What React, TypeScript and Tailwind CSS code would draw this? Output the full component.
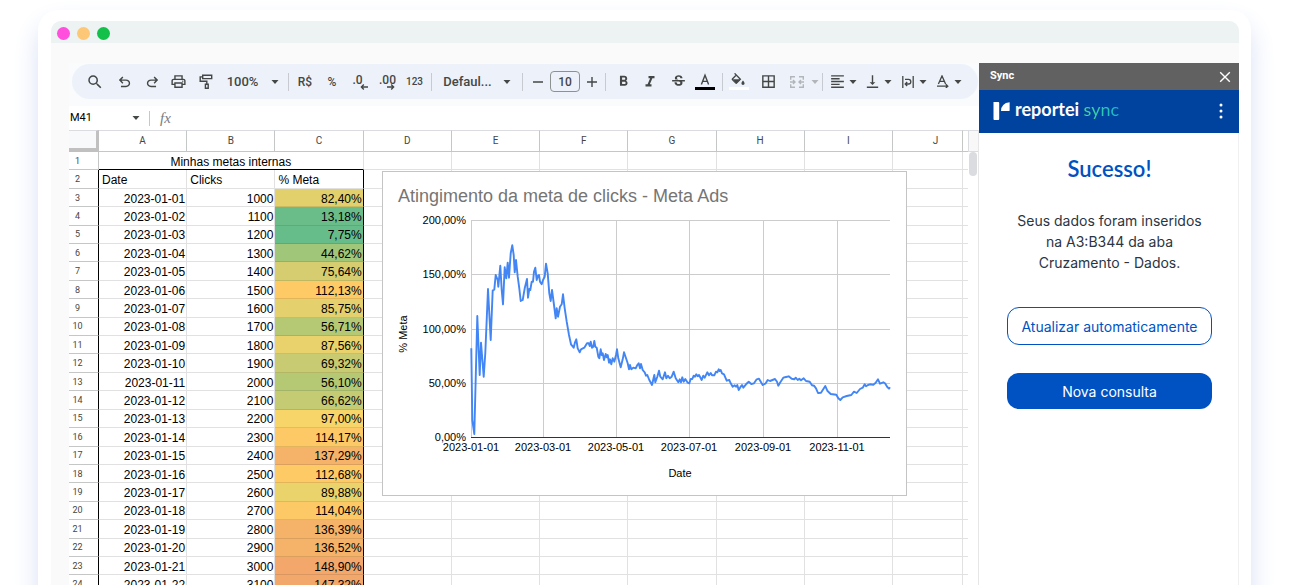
import React from 'react';
import { MdBorderAll, MdFormatAlignLeft, MdFormatBold, MdFormatItalic, MdOutlinePrint, MdSearch, MdStrikethroughS, MdVerticalAlignBottom } from 'react-icons/md';

// ── Data ─────────────────────────────────────────────────────────────────────

type Row = { date: string; clicks: number; meta: string; tone: string };

const ROWS: Row[] = [
  { date: '2023-01-01', clicks: 1000, meta: '82,40%', tone: 'bg-[#e1d06c]' },
  { date: '2023-01-02', clicks: 1100, meta: '13,18%', tone: 'bg-[#6abd88]' },
  { date: '2023-01-03', clicks: 1200, meta: '7,75%', tone: 'bg-[#67bd89]' },
  { date: '2023-01-04', clicks: 1300, meta: '44,62%', tone: 'bg-[#a0c67a]' },
  { date: '2023-01-05', clicks: 1400, meta: '75,64%', tone: 'bg-[#d5cd6f]' },
  { date: '2023-01-06', clicks: 1500, meta: '112,13%', tone: 'bg-[#fdca65]' },
  { date: '2023-01-07', clicks: 1600, meta: '85,75%', tone: 'bg-[#e4d16d]' },
  { date: '2023-01-08', clicks: 1700, meta: '56,71%', tone: 'bg-[#b5c975]' },
  { date: '2023-01-09', clicks: 1800, meta: '87,56%', tone: 'bg-[#e9d26b]' },
  { date: '2023-01-10', clicks: 1900, meta: '69,32%', tone: 'bg-[#c9cb72]' },
  { date: '2023-01-11', clicks: 2000, meta: '56,10%', tone: 'bg-[#b5c975]' },
  { date: '2023-01-12', clicks: 2100, meta: '66,62%', tone: 'bg-[#c5cb72]' },
  { date: '2023-01-13', clicks: 2200, meta: '97,00%', tone: 'bg-[#f8d568]' },
  { date: '2023-01-14', clicks: 2300, meta: '114,17%', tone: 'bg-[#fcc966]' },
  { date: '2023-01-15', clicks: 2400, meta: '137,29%', tone: 'bg-[#f4b369]' },
  { date: '2023-01-16', clicks: 2500, meta: '112,68%', tone: 'bg-[#fdca65]' },
  { date: '2023-01-17', clicks: 2600, meta: '89,88%', tone: 'bg-[#ead36b]' },
  { date: '2023-01-18', clicks: 2700, meta: '114,04%', tone: 'bg-[#fcc966]' },
  { date: '2023-01-19', clicks: 2800, meta: '136,39%', tone: 'bg-[#f4b369]' },
  { date: '2023-01-20', clicks: 2900, meta: '136,52%', tone: 'bg-[#f4b369]' },
  { date: '2023-01-21', clicks: 3000, meta: '148,90%', tone: 'bg-[#f3a76b]' },
  { date: '2023-01-22', clicks: 3100, meta: '147,32%', tone: 'bg-[#f3a86b]' },
];

const COLUMNS = ['A', 'B', 'C', 'D', 'E', 'F', 'G', 'H', 'I', 'J'];

const X_TICKS = [
  { x: 89, label: '2023-01-01' },
  { x: 161, label: '2023-03-01' },
  { x: 234, label: '2023-05-01' },
  { x: 307, label: '2023-07-01' },
  { x: 381, label: '2023-09-01' },
  { x: 455, label: '2023-11-01' },
];

const Y_TICKS = [
  { y: 49, label: '200,00%' },
  { y: 103, label: '150,00%' },
  { y: 158, label: '100,00%' },
  { y: 212, label: '50,00%' },
  { y: 266, label: '0,00%' },
];

const SERIES =
  '89.3,177.3 90.3,249 92.3,263 95.3,145 97.7,204 99,171.7 101.7,205.7 103.3,182 106,118 108.7,169 110.7,119.3 112.3,118.7 ' +
  '113.7,104 115.7,109 116.3,115.7 118.3,94.7 119.7,119 121,133.3 122.7,96.3 124.3,107.3 125.7,91.7 127,106.7 128.7,82.3 ' +
  '130.3,74.3 131.7,84 132.7,101.3 134,89 135.7,105.7 137.3,117.3 138.7,130 140.7,129 142.7,117.3 145,108 146,126.7 ' +
  '147.3,118 148.3,119 149.7,110.7 151,110.7 152,100.7 153.3,96.7 154.7,109 156,104.7 157,104 158,110.7 159.7,113.3 ' +
  '161,109 162.7,105.7 164,92.7 165.7,102.3 167.3,122.3 168.7,130 170,119 172,134 173.7,147.3 174.7,137.3 176,145.7 ' +
  '178,135.7 179.7,133.3 181,123.3 182.7,137.3 184.7,150.7 187,164 189,173.3 191.7,176.7 193,171.3 194.3,168.3 ' +
  '195.7,177.3 197.7,181.3 199,178.3 202.3,176.7 205,172.3 206.7,172.3 207.7,175 208.7,170.7 210,176.7 211.3,175.7 ' +
  '212.3,170 213.3,175.7 214.7,176.7 216.3,185.7 217.3,187.3 218.7,178.3 219.7,184 220.7,182.3 222,189 223.7,183 ' +
  '224.7,186.3 225.7,184 227,191.7 228,188.3 229.3,193.3 230.7,187.3 232.3,190.7 234,184 235,178.3 236.3,187.3 ' +
  '238.7,196.3 240.7,188.3 242,181.3 243.7,186.3 245.7,192.3 247,198.3 248,194 249.3,198.3 251.3,196.7 253.7,197.3 ' +
  '255.3,194 256.7,192.3 258,197.3 259,193 260.7,199 262.7,201.3 264,204.7 265.3,204 267.3,209 270,214 272.3,204 ' +
  '273.3,211.3 275.3,205.7 277,199.7 278.3,205.7 280.7,208.3 283,201.3 284.3,207.3 286,204.7 287.7,207.3 289.7,205.7 ' +
  '291.7,200.7 293.7,207.3 296.3,211.3 297.7,208.3 299,211.3 300.3,206.3 301.7,210.7 303.3,208 305.7,211.7 307.3,212.3 ' +
  '308.7,208 310.3,208 311.7,204.7 313,205.7 314.3,203.3 315.7,205.3 317,204 319.7,209 321.3,204.7 322.7,206.7 ' +
  '325.3,201.3 327,204.3 328.7,202 330,204.3 332.3,204.3 334,200.7 335.3,201.3 336.7,198.3 337.7,200 338.7,199 ' +
  '340,202.3 342,203.3 344.7,209.7 347.3,209 348.7,212.3 350.7,215.7 352.7,214.3 354,215.7 355.3,214 356.7,219 ' +
  '358.7,215.7 360,214 361.3,216.7 364,213.3 366.7,210.7 369.3,213 372,212.3 374.7,208.3 377,207.7 380.7,214 ' +
  '383.7,212.3 385.7,209 388,210 393,208 395,210.7 396.3,214.7 398,211.7 401.3,206.7 404,206 406.7,205.3 409.7,207.7 ' +
  '412.3,208.3 413.7,206.7 415.7,209 417.3,207.7 419,209.3 421.7,207.3 424,210 427.7,210.7 430,214.3 432,214.7 ' +
  '434,217.3 436,222 439,221.7 443.3,215 445.3,219.7 448.7,223 454.3,223.7 456.3,227.3 458.3,229 460.7,226.3 ' +
  '464.7,225 469.3,224 472,220.7 474.7,222 478,218 480.7,216.7 482.7,213.3 484,215.3 486,214 488,213.3 491.3,213.7 ' +
  '493.7,211.7 496,208.3 498,212.7 501.3,211.3 503,212.3 505.3,216 507,217.7 508,216.3';

// ── Toolbar ──────────────────────────────────────────────────────────────────

const Tool: React.FC<{ label: string; className: string; children: React.ReactNode }> = ({ label, className, children }) => (
  <button aria-label={label} className={`flex h-7 shrink-0 items-center justify-center ${className}`}>
    {children}
  </button>
);

const Caret: React.FC<{ className?: string }> = ({ className = 'text-[#444746]' }) => (
  <svg viewBox="0 0 8 4" className={`h-1 w-2 shrink-0 ${className}`} fill="currentColor" aria-hidden="true">
    <path d="M0.5 0h7L4 4z" />
  </svg>
);

const Divider: React.FC<{ className: string }> = ({ className }) => (
  <span className={`flex shrink-0 justify-center ${className}`}>
    <span className="h-[18px] w-px bg-[#c7cad0]" />
  </span>
);

const Symbol: React.FC<{ d: string }> = ({ d }) => (
  <svg viewBox="0 -960 960 960" className="size-[17px]" fill="currentColor" aria-hidden="true">
    <path d={d} />
  </svg>
);

const UNDO = 'M280-160v-80h284q63 0 109.5-40T720-380q0-60-46.5-100T564-520H312l104 104-56 56-200-200 200-200 56 56-104 104h252q97 0 166.5 63T800-380q0 94-69.5 157T564-160H280Z';
const REDO = 'M396-160q-97 0-166.5-63T160-380q0-94 69.5-157T396-600h252L544-704l56-56 200 200-200 200-56-56 104-104H396q-63 0-109.5 40T240-380q0 60 46.5 100T396-240h284v80H396Z';

const Decimals: React.FC<{ text: string; back?: boolean }> = ({ text, back }) => (
  <span className={`flex flex-col pt-0.5 ${back ? 'w-[15px]' : 'w-4'}`}>
    <span className="self-start text-[12px] leading-[8px] font-medium">{text}</span>
    <svg viewBox="0 0 8 6" className="h-[6px] w-2 self-end" fill="none" stroke="currentColor" strokeWidth="1.4" aria-hidden="true">
      <path d={back ? 'M8 3H1.5M3.8 .6L1.4 3l2.4 2.4' : 'M0 3h6.5M4.2 .6L6.6 3L4.2 5.4'} />
    </svg>
  </span>
);

const Toolbar = () => (
  <div className="bg-[#f9fbfd] pt-px pb-[7px] pl-[3px] pr-px">
    <div className="flex h-[35px] items-center rounded-full bg-[#edf2fa] pl-[9px] font-[Roboto,sans-serif] text-[#444746]">
      <Tool label="Pesquisar" className="w-7"><MdSearch size={18} /></Tool>
      <Tool label="Desfazer" className="w-[30px]"><Symbol d={UNDO} /></Tool>
      <Tool label="Refazer" className="w-[26px]"><Symbol d={REDO} /></Tool>
      <Tool label="Imprimir" className="w-[27px]"><MdOutlinePrint size={17} /></Tool>
      <Tool label="Pintar formatação" className="w-[27px]">
        <svg viewBox="0 0 14 16" className="h-4 w-3.5" fill="none" stroke="currentColor" strokeWidth="1.4" aria-hidden="true">
          <path d="M3.7 1.2h9v3.4h-9zM3.7 2.9H1.2v4.4h6.6v3" />
          <path d="M6.4 10.3h2.8v4H6.4z" />
        </svg>
      </Tool>
      <Tool label="Zoom" className="w-[47px] text-[13px] font-medium">100%</Tool>
      <Tool label="Opções de zoom" className="w-[18px]"><Caret /></Tool>
      <Divider className="w-[9px]" />
      <Tool label="Moeda" className="w-6 text-[12px] font-medium">R$</Tool>
      <Tool label="Porcentagem" className="w-[30px] text-[12px] font-medium">%</Tool>
      <Tool label="Menos casas decimais" className="w-[26px]"><Decimals text=".0" back /></Tool>
      <Tool label="Mais casas decimais" className="w-7"><Decimals text=".00" /></Tool>
      <Tool label="Mais formatos" className="w-[27px] text-[10px] font-medium">123</Tool>
      <Divider className="w-[7px]" />
      <Tool label="Fonte" className="w-[65px] text-[13px] font-medium">Defaul...</Tool>
      <Tool label="Lista de fontes" className="w-3.5"><Caret /></Tool>
      <Divider className="w-[17px]" />
      <Tool label="Diminuir fonte" className="w-[13px]">
        <svg viewBox="0 0 10 10" className="size-2.5" stroke="currentColor" strokeWidth="1.4" aria-hidden="true"><path d="M0 5h10" /></svg>
      </Tool>
      <input aria-label="Tamanho da fonte" defaultValue="10" className="mx-[6px] h-[21px] w-[30px] shrink-0 rounded-[4px] border border-[#8e9192] text-center text-[12px] font-medium" />
      <Tool label="Aumentar fonte" className="w-3">
        <svg viewBox="0 0 10 10" className="size-2.5" stroke="currentColor" strokeWidth="1.4" aria-hidden="true"><path d="M0 5h10M5 0v10" /></svg>
      </Tool>
      <Divider className="w-3.5" />
      <Tool label="Negrito" className="w-[22px]"><MdFormatBold size={17} /></Tool>
      <Tool label="Itálico" className="w-8"><MdFormatItalic size={18} /></Tool>
      <Tool label="Tachado" className="w-6"><MdStrikethroughS size={17} /></Tool>
      <Tool label="Cor do texto" className="w-[30px]">
        <svg viewBox="0 0 20 18" className="h-[18px] w-5" aria-hidden="true">
          <path d="M6.4 11.5L10 2.2l3.6 9.3M7.6 8.4h4.8" fill="none" stroke="currentColor" strokeWidth="1.4" />
          <path d="M0 14h20v3H0z" fill="#000" />
        </svg>
      </Tool>
      <Divider className="w-1" />
      <Tool label="Cor de preenchimento" className="w-[30px]">
        <svg viewBox="0 0 20 18" className="h-[18px] w-5" aria-hidden="true">
          <path d="M5.6 .3l5.8 5.9-3.6 3.7q-.6.6-1.2 0L3.6 6.9q-.6-.6 0-1.2L7.3 2" fill="none" stroke="currentColor" strokeWidth="1.3" />
          <path d="M3.8 6.3h7.4L7.2 10.6z" fill="currentColor" />
          <path d="M14 7.6s-1.6 1.9-1.6 2.7a1.6 1.6 0 0 0 3.2 0c0-.8-1.6-2.7-1.6-2.7z" fill="currentColor" />
          <path d="M0 14h20v3H0z" fill="#fff" />
        </svg>
      </Tool>
      <Tool label="Bordas" className="w-7"><MdBorderAll size={17} /></Tool>
      <Tool label="Mesclar células" className="w-[29px] text-[#b2b6bb]">
        <svg viewBox="0 0 14 12" className="h-3 w-3.5" fill="none" stroke="currentColor" strokeWidth="1.4" aria-hidden="true">
          <path d="M5 .7H.7v3M.7 8.3v3H5M9 .7h4.3v3M13.3 8.3v3H9M0 6h5M3 4l2 2-2 2M14 6H9M11 4L9 6l2 2" />
        </svg>
      </Tool>
      <Tool label="Opções de mesclagem" className="w-2"><Caret className="text-[#b2b6bb]" /></Tool>
      <Divider className="w-[7px]" />
      <Tool label="Alinhamento horizontal" className="w-[23px]"><MdFormatAlignLeft size={17} /></Tool>
      <Tool label="Opções horizontais" className="w-2"><Caret /></Tool>
      <Tool label="Alinhamento vertical" className="w-[27px] pl-1"><MdVerticalAlignBottom size={17} /></Tool>
      <Tool label="Opções verticais" className="w-2"><Caret /></Tool>
      <Tool label="Ajuste de texto" className="w-[27px] pl-1">
        <svg viewBox="0 0 12 12" className="size-3" fill="none" stroke="currentColor" strokeWidth="1.3" aria-hidden="true">
          <path d="M.8 0v12M11.2 0v12M3 3.4h3.6a2.2 2.3 0 0 1 0 4.6H3.4M5.2 6L3.2 8l2 2" />
        </svg>
      </Tool>
      <Tool label="Opções de ajuste" className="w-2"><Caret /></Tool>
      <Tool label="Rotação do texto" className="w-[27px] pl-1">
        <svg viewBox="0 0 12 13" className="h-[13px] w-3" fill="none" stroke="currentColor" strokeWidth="1.3" aria-hidden="true">
          <path d="M1.4 9L5 .9L8.6 9M2.6 6.4h4.8M0 11.2h10.4M8.8 9.2l2 2-2 1.8" />
        </svg>
      </Tool>
      <Tool label="Opções de rotação" className="w-2"><Caret /></Tool>
    </div>
  </div>
);

const FormulaBar = () => (
  <div className="flex h-6 items-center bg-white">
    <input aria-label="Caixa de nome" defaultValue="M41" className="w-[63px] shrink-0 pl-px font-[Roboto,sans-serif] text-[11px] text-black" />
    <Caret />
    <span className="ml-[9px] h-[15px] w-px bg-[#c7c7c7]" />
    <span className="ml-[10px] font-['Liberation_Serif',serif] text-[15px] leading-4 text-[#777c81] italic">fx</span>
  </div>
);

// ── Sheet ────────────────────────────────────────────────────────────────────

const Blank: React.FC<{ count: number }> = ({ count }) => (
  <>
    {Array.from({ length: count }, (_, i) => (
      <td key={i} className="border-r border-b border-[#e1e1e1]" />
    ))}
    <td className="border-b border-[#e1e1e1]" />
  </>
);

const RowHead: React.FC<{ n: number; outlined?: boolean }> = ({ n, outlined }) => (
  <th
    scope="row"
    className={`border-r border-b border-b-[#c4c7c5] pr-3 text-center font-[Roboto,sans-serif] text-[9px] font-normal text-[#444746] ${outlined ? 'border-r-black' : 'border-r-[#c4c7c5]'}`}
  >
    {n}
  </th>
);

const Grid = () => (
  <table className="h-[464px] w-full table-fixed border-separate border-spacing-0 bg-white font-[Arial,'Liberation_Sans',sans-serif] text-[12px] leading-[14px] text-black">
    <colgroup>
      <col className="w-[30px]" />
      {COLUMNS.slice(0, 9).map((c) => <col key={c} />)}
      <col className="w-[70px]" />
      <col className="w-[5px]" />
    </colgroup>
    <thead>
      <tr className="h-[22px]">
        <td className="border-t border-r-3 border-b-4 border-t-[#dadce0] border-r-[#c0c0c0] border-b-[#c0c0c0] bg-[#f8f9fa]" />
        {COLUMNS.map((c) => (
          <th
            key={c}
            scope="col"
            className={`border-t border-r border-b border-t-[#dadce0] border-r-[#c4c7c5] border-b-[#c4c7c5] p-0 font-[Roboto,sans-serif] text-[10px] font-normal text-[#444746] ${c === 'J' ? 'pl-4' : ''}`}
          >
            {c}
          </th>
        ))}
        <td className="border-y border-t-[#dadce0] border-b-[#c4c7c5]" />
      </tr>
    </thead>
    <tbody>
      <tr>
        <RowHead n={1} />
        <td colSpan={3} className="border-r border-b border-r-[#e1e1e1] border-b-black p-0 pt-0.5 text-center">Minhas metas internas</td>
        <Blank count={7} />
      </tr>
      <tr>
        <RowHead n={2} outlined />
        <td className="border-r border-b border-[#e1e1e1] p-0 pt-0.5 pl-[3px]">Date</td>
        <td className="border-r border-b border-[#e1e1e1] p-0 pt-0.5 pl-[3px]">Clicks</td>
        <td className="border-r border-b border-r-black border-b-[#e1e1e1] p-0 pt-0.5 pl-[3px]">% Meta</td>
        <Blank count={7} />
      </tr>
      {ROWS.map((r, i) => (
        <tr key={r.date}>
          <RowHead n={i + 3} outlined />
          <td className="border-r border-b border-[#e1e1e1] p-0 pt-0.5 pr-px text-right">{r.date}</td>
          <td className="border-r border-b border-[#e1e1e1] p-0 pt-0.5 pr-px text-right">{r.clicks}</td>
          <td className={`border-r border-b border-r-black border-b-black/10 p-0 pt-0.5 pr-px text-right ${r.tone}`}>{r.meta}</td>
          <Blank count={7} />
        </tr>
      ))}
    </tbody>
  </table>
);

const ClicksChart = () => (
  <svg viewBox="0 0 525 325" className="h-[325px] w-[525px] font-[Arial,'Liberation_Sans',sans-serif]" role="img" aria-label="Atingimento da meta de clicks">
    <rect x=".5" y=".5" width="524" height="324" fill="#ffffff" stroke="#c4c4c4" />
    <text x="16" y="31" fontSize="18" fill="#757575">Atingimento da meta de clicks - Meta Ads</text>
    <g fill="none" stroke="#cccccc" shapeRendering="crispEdges">
      {Y_TICKS.map((t) => <path key={t.label} d={`M89 ${t.y + 0.5}H508`} />)}
      {X_TICKS.map((t) => <path key={t.label} d={`M${t.x + 0.5} 49V266`} />)}
    </g>
    <path d="M89 266.5H508" stroke="#333333" shapeRendering="crispEdges" />
    <polyline points={SERIES} fill="none" stroke="#4285f4" strokeWidth="1.9" strokeLinejoin="round" />
    <g fontSize="11" fill="#000000">
      {Y_TICKS.map((t) => <text key={t.label} x="84" y={t.y + 4} textAnchor="end">{t.label}</text>)}
      {X_TICKS.map((t) => <text key={t.label} x={t.x} y="280" textAnchor="middle">{t.label}</text>)}
      <text x="298" y="306" textAnchor="middle">Date</text>
      <text transform="translate(25 163) rotate(-90)" textAnchor="middle">% Meta</text>
    </g>
  </svg>
);

// ── Sidebar ──────────────────────────────────────────────────────────────────

const Sidebar = () => (
  <aside className="flex w-[260px] shrink-0 flex-col bg-white">
    <div className="flex h-[27px] items-center justify-between bg-[#616161] pr-2 pl-[11px] text-white">
      <h2 className="font-[Roboto,sans-serif] text-[11px] font-bold">Sync</h2>
      <button aria-label="Fechar">
        <svg viewBox="0 0 12 12" className="size-3" stroke="currentColor" strokeWidth="1.4" aria-hidden="true"><path d="M1.2 1.2l9.6 9.6M10.8 1.2L1.2 10.8" /></svg>
      </button>
    </div>
    <div className="flex h-[43px] items-center justify-between bg-[#00439e] pr-4 pb-0.5 pl-3.5 text-white">
      <div className="flex items-center">
        <svg viewBox="0 0 17 18" className="mr-[5px] h-[18px] w-[17px]" fill="currentColor" aria-hidden="true">
          <path d="M.5 0h4.8q.9 0 .9 1v16q0 1-.9 1H1.4Q.5 18 .5 17z" />
          <path d="M16.6 .2v8q0 .9-.9.9H8Q8.2 1 16.6 .2z" />
        </svg>
        <span className="pb-1 font-[Lato,sans-serif] text-[18px] leading-6 font-bold">
          reportei <span className="bg-linear-to-r from-[#46d98f] to-[#17b6cf] bg-clip-text font-normal text-transparent">sync</span>
        </span>
      </div>
      <button aria-label="Menu">
        <svg viewBox="0 0 4 16" className="h-4 w-1" fill="currentColor" aria-hidden="true"><circle cx="2" cy="2" r="1.5" /><circle cx="2" cy="8" r="1.5" /><circle cx="2" cy="14" r="1.5" /></svg>
      </button>
    </div>
    <div className="flex flex-1 flex-col border-r border-[#f0f0f0] pt-5 pr-[26px] pl-7 text-center font-[Inter,sans-serif] text-[14px]">
      <h1 className="font-[Lato,sans-serif] text-[22px] leading-8 font-semibold text-[#0052c2]">Sucesso!</h1>
      <p className="mt-[25px] leading-[21px] text-[#2b3543]">
        Seus dados foram inseridos
        <br />
        na A3:B344 da aba
        <br />
        Cruzamento - Dados.
      </p>
      <button className="mt-[34px] h-[38px] rounded-xl border border-[#0052c2] text-[#0052c2]">Atualizar automaticamente</button>
      <button className="mt-7 h-9 rounded-xl bg-[#0052c2] text-white">Nova consulta</button>
    </div>
  </aside>
);

export default function App() {
  return (
    <div className="h-screen overflow-hidden bg-white px-[38px] pt-[10px]">
      <div className="rounded-t-[20px] bg-white pt-[11px] pr-3 pb-10 pl-[13px] shadow-[0_14px_26px_#d9e1f5]">
        <div className="overflow-hidden rounded-t-[10px] bg-[#fafafa]">
          <div className="flex h-[22px] items-center gap-[7px] bg-[#edf2f2] pt-[3px] pl-[6px]">
            <span className="size-[13px] rounded-full bg-[#ff4fdc]" />
            <span className="size-[13px] rounded-full bg-[#fcc878]" />
            <span className="size-[13px] rounded-full bg-[#14c04a]" />
          </div>
          <div className="flex pt-5 pl-[18px]">
            <main className="min-w-0 flex-1">
              <Toolbar />
              <FormulaBar />
              <div className="relative flex">
                <Grid />
                <div className="flex w-[11px] shrink-0 flex-col items-center border-r border-[#e6e6e6] bg-white">
                  <div className="h-[22px] w-full border-y border-l border-[#dadce0] bg-[#f8f8f8]" />
                  <div className="h-6 w-2 rounded-full bg-[#dadce0]" />
                </div>
                <div className="absolute top-[41px] left-[313px]">
                  <ClicksChart />
                </div>
              </div>
            </main>
            <Sidebar />
          </div>
        </div>
      </div>
    </div>
  );
}
